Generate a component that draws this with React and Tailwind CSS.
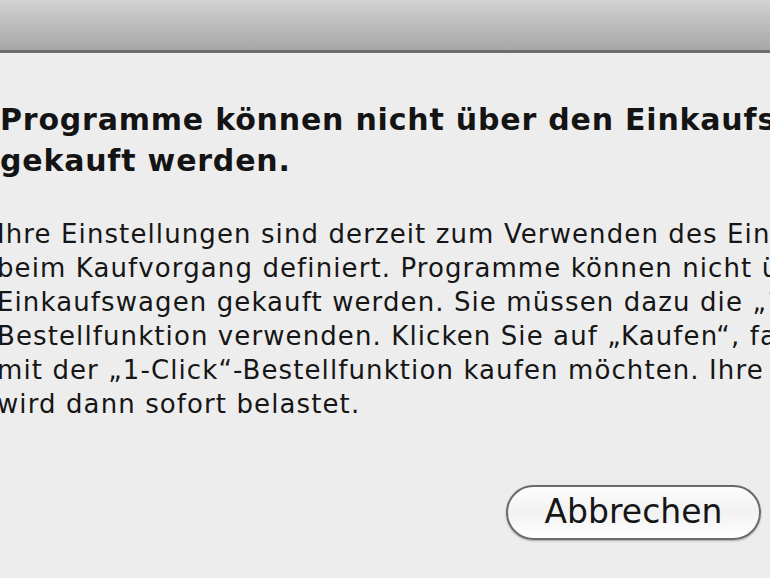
export default function App() {
  const body = [
    "Ihre Einstellungen sind derzeit zum Verwenden des Einkaufswagens",
    "beim Kaufvorgang definiert. Programme können nicht über den",
    "Einkaufswagen gekauft werden. Sie müssen dazu die „1-Click“-",
    "Bestellfunktion verwenden. Klicken Sie auf „Kaufen“, falls Sie Programme",
    "mit der „1-Click“-Bestellfunktion kaufen möchten. Ihre Karte",
    "wird dann sofort belastet.",
  ];
  return (
    <div className="w-[770px] h-[578px] overflow-hidden bg-[#ededed] flex flex-col" style={{ fontFamily: '"DejaVu Sans", Verdana, sans-serif' }}>
      <div className="h-[53px] shrink-0 bg-gradient-to-b from-[#d3d3d3] to-[#a6a6a6] border-b-[3px] border-[#6c6c6c]" />
      <div className="flex-1 flex flex-col overflow-hidden">
        <div className="mt-[46px] text-[30px] font-bold tracking-[0.8px] leading-[41px] text-[#141414] whitespace-nowrap">
          <div>Programme können nicht über den Einkaufswagen</div>
          <div>gekauft werden.</div>
        </div>
        <div className="mt-[36px] text-[26px] tracking-[1.1px] leading-[34px] text-[#161616] whitespace-nowrap -ml-[3px]">
          {body.map((l, i) => (
            <div key={i}>{l}</div>
          ))}
        </div>
        <div className="flex justify-end pr-[9px] mt-[64px]">
          <button className="w-[255px] h-[55px] rounded-full border-2 border-[#6a6a6a] bg-gradient-to-b from-[#fdfdfd] via-[#f2f2f2] to-[#ffffff] shadow-[0_1px_2px_rgba(0,0,0,0.3)] text-[33px] text-[#161616] flex items-center justify-center pb-[2px]">
            Abbrechen
          </button>
        </div>
      </div>
    </div>
  );
}
